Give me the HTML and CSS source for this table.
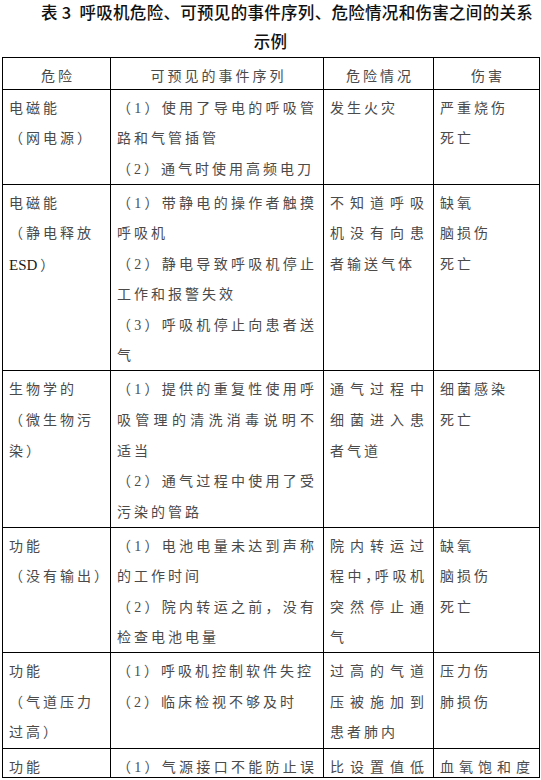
FILE: index.html
```html
<!DOCTYPE html>
<html lang="zh-CN">
<head>
<meta charset="utf-8">
<title>表3 呼吸机危险示例</title>
<link rel="stylesheet" href="styles.css">
</head>
<body>
<div class="page">
  <h1 class="title">表 3&nbsp; 呼吸机危险、可预见的事件序列、危险情况和伤害之间的关系<br>示例</h1>
  <table class="grid">
    <colgroup>
      <col class="c1"><col class="c2"><col class="c3"><col class="c4">
    </colgroup>
    <thead>
      <tr>
        <th><div class="ln">危险</div></th>
        <th><div class="ln">可预见的事件序列</div></th>
        <th><div class="ln">危险情况</div></th>
        <th><div class="ln">伤害</div></th>
      </tr>
    </thead>
    <tbody>
      <tr>
        <td><div class="ln">电磁能</div><div class="ln">（网电源）</div></td>
        <td><div class="ln j">（1）使用了导电的呼吸管</div><div class="ln">路和气管插管</div><div class="ln">（2）通气时使用高频电刀</div></td>
        <td><div class="ln">发生火灾</div></td>
        <td><div class="ln">严重烧伤</div><div class="ln">死亡</div></td>
      </tr>
      <tr>
        <td><div class="ln">电磁能</div><div class="ln">（静电释放</div><div class="ln"><span class="lat">ESD</span><span class="fp">）</span></div></td>
        <td><div class="ln j">（1）带静电的操作者触摸</div><div class="ln">呼吸机</div><div class="ln j">（2）静电导致呼吸机停止</div><div class="ln">工作和报警失效</div><div class="ln j">（3）呼吸机停止向患者送</div><div class="ln">气</div></td>
        <td><div class="ln j">不知道呼吸</div><div class="ln j">机没有向患</div><div class="ln">者输送气体</div></td>
        <td><div class="ln">缺氧</div><div class="ln">脑损伤</div><div class="ln">死亡</div></td>
      </tr>
      <tr>
        <td><div class="ln">生物学的</div><div class="ln">（微生物污</div><div class="ln">染）</div></td>
        <td><div class="ln j">（1）提供的重复性使用呼</div><div class="ln j">吸管理的清洗消毒说明不</div><div class="ln">适当</div><div class="ln j">（2）通气过程中使用了受</div><div class="ln">污染的管路</div></td>
        <td><div class="ln j">通气过程中</div><div class="ln j">细菌进入患</div><div class="ln">者气道</div></td>
        <td><div class="ln">细菌感染</div><div class="ln">死亡</div></td>
      </tr>
      <tr>
        <td><div class="ln">功能</div><div class="ln">（没有输出）</div></td>
        <td><div class="ln j">（1）电池电量未达到声称</div><div class="ln">的工作时间</div><div class="ln j">（2）院内转运之前，没有</div><div class="ln">检查电池电量</div></td>
        <td><div class="ln j">院内转运过</div><div class="ln j">程中<span class="cp">，</span>呼吸机</div><div class="ln j">突然停止通</div><div class="ln">气</div></td>
        <td><div class="ln">缺氧</div><div class="ln">脑损伤</div><div class="ln">死亡</div></td>
      </tr>
      <tr>
        <td><div class="ln">功能</div><div class="ln">（气道压力</div><div class="ln">过高）</div></td>
        <td><div class="ln">（1）呼吸机控制软件失控</div><div class="ln">（2）临床检视不够及时</div></td>
        <td><div class="ln j">过高的气道</div><div class="ln j">压被施加到</div><div class="ln">患者肺内</div></td>
        <td><div class="ln">压力伤</div><div class="ln">肺损伤</div></td>
      </tr>
      <tr class="last">
        <td><div class="ln">功能</div></td>
        <td><div class="ln j">（1）气源接口不能防止误</div></td>
        <td><div class="ln j">比设置值低</div></td>
        <td><div class="ln j">血氧饱和度</div></td>
      </tr>
    </tbody>
  </table>
</div>
</body>
</html>
```
FILE: styles.css
```css
html, body {
  margin: 0;
  padding: 0;
  background: #ffffff;
}

.page {
  width: 541px;
  padding: 0 2px;
  box-sizing: border-box;
}

.title {
  margin: -2px 0 1px 0;
  font-family: "Noto Sans CJK SC", "Noto Sans", sans-serif;
  font-size: 16.5px;
  font-weight: 500;
  letter-spacing: 0.3px;
  line-height: 29px;
  color: #111111;
  text-align: center;
  text-indent: 33px;
}

.grid {
  width: 537px;
  border-collapse: collapse;
  table-layout: fixed;
  font-family: "Liberation Serif", "Noto Sans CJK SC", serif;
  font-size: 14px;
  letter-spacing: 3px;
  color: #4a4a4a;
}

.c1 { width: 108px; }
.c2 { width: 213px; }
.c3 { width: 110px; }
.c4 { width: 106px; }

.grid th,
.grid td {
  border: 1px solid #000000;
  padding: 0 6px 2.5px 6px;
  vertical-align: top;
  text-align: left;
  font-weight: normal;
}

.grid th {
  padding: 0 3px 0 6px;
  text-align: center;
}

.grid th .ln {
  line-height: 37px;
}

.ln {
  height: 30.55px;
  line-height: 38px;
  white-space: nowrap;
}

.j {
  text-align: justify;
  text-align-last: justify;
}

.cp {
  letter-spacing: -5px;
}

.lat {
  font-size: 15px;
  letter-spacing: 0;
  color: #1a1a1a;
}

.fp {
  padding-left: 3px;
}

.last td {
  padding-bottom: 0;
}

.last .ln {
  height: 28px;
}
```
